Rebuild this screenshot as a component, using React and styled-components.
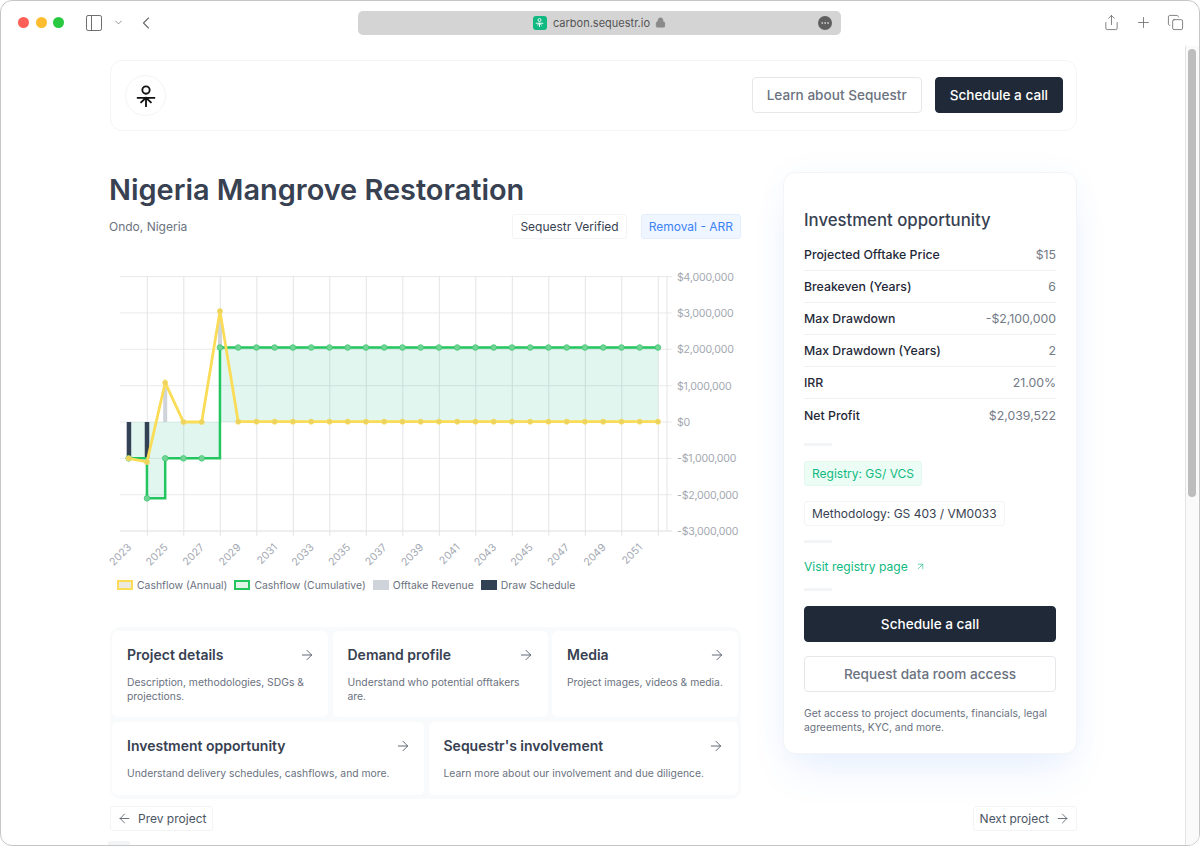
import React from 'react';
import styled, {createGlobalStyle} from 'styled-components';
import {ArrowLeft, ArrowRight, ArrowUpRight, ChevronDown, ChevronLeft, Copy, Ellipsis, Lock, PanelLeft, Plus, Share} from 'lucide-react';

const GlobalStyle = createGlobalStyle`
html, body {
    margin: 0;
    height: 846px;
    overflow: hidden;
    background: #fff;
    font-family: Inter, "Liberation Sans", sans-serif;
}
* { box-sizing: border-box; }
`;

const Window = styled.div`
width: 1200px;
height: 846px;
display: flex;
flex-direction: column;
background: #fff;
border: 1px solid #c6c6c6;
border-radius: 12px;
overflow: hidden;
`;

const Toolbar = styled.header`
height: 45px;
flex-shrink: 0;
display: flex;
align-items: center;
color: #6e6e6e;
padding-bottom: 2px;
`;

const Lights = styled.div`
display: flex;
gap: 6.5px;
margin-left: 17px;
width: 66px;
`;

const Light = styled.span`
width: 11px;
height: 11px;
border-radius: 50%;
background: ${p => p.$color};
`;

const ToolLeft = styled.div`
width: 274px;
display: flex;
align-items: center;
`;

const UrlBar = styled.div`
width: 483px;
height: 24px;
background: #d4d4d4;
border-radius: 5px;
display: flex;
align-items: center;
justify-content: center;
position: relative;
font-size: 11px;
color: #555;
gap: 6px;
`;

const Favicon = styled.span`
width: 14px;
height: 14px;
border-radius: 3px;
background: #10b981;
display: flex;
align-items: center;
justify-content: center;
`;

const MoreDot = styled.span`
position: absolute;
right: 9px;
top: 5px;
width: 14px;
height: 14px;
border-radius: 50%;
background: #5f5f5f;
color: #ddd;
display: flex;
align-items: center;
justify-content: center;
`;

const ToolRight = styled.div`
margin-left: auto;
margin-right: 15px;
display: flex;
gap: 15px;
align-items: center;
`;

const Viewport = styled.div`
flex: 1;
min-height: 0;
display: flex;
`;

const Page = styled.main`
flex: 1;
min-width: 0;
padding: 14px 108px 0 109px;
`;

const Track = styled.div`
width: 14px;
flex-shrink: 0;
border-left: 1px solid #e4e4e4;
background: #fafafa;
padding: 3px 2px 0 2px;
`;

const Thumb = styled.div`
height: 448px;
width: 8px;
background: #bdbdbd;
border-radius: 4px;
`;

const TopCard = styled.div`
height: 71px;
border: 1px solid #f3f4f6;
border-radius: 12px;
display: flex;
align-items: center;
justify-content: space-between;
padding: 0 13px 0 14px;
`;

const LogoCircle = styled.div`
width: 41px;
height: 41px;
border-radius: 50%;
border: 1px solid #f3f4f6;
display: flex;
align-items: center;
justify-content: center;
`;

const Buttons = styled.div`
display: flex;
gap: 13px;
margin-bottom: 2px;
`;

const Button = styled.button`
height: 36px;
font-family: inherit;
font-size: 13.6px;
font-weight: 500;
border-radius: 4px;
padding: 0 14px;
border: 1px solid ${p => (p.$dark ? '#1f2937' : '#e5e7eb')};
background: ${p => (p.$dark ? '#1f2937' : '#fff')};
color: ${p => (p.$dark ? '#fff' : '#6b7280')};
width: ${p => (p.$full ? '100%' : 'auto')};
display: block;
`;

const Columns = styled.div`
display: grid;
grid-template-columns: 631px 294px;
justify-content: space-between;
align-items: start;
`;

const Left = styled.section`
padding-top: 39px;
`;

const Title = styled.h1`
margin: 0 0 0 -1px;
font-size: 28.9px;
line-height: 40px;
font-weight: 600;
color: #374151;
`;

const SubRow = styled.div`
margin-top: 4px;
display: flex;
align-items: center;
justify-content: space-between;
height: 25px;
`;

const Place = styled.span`
font-size: 12px;
color: #6b7280;
margin-left: -1px;
`;

const Tags = styled.div`
display: flex;
gap: 14px;
`;

const Tag = styled.span`
display: inline-flex;
align-items: center;
height: 25px;
padding: 0 7px;
border-radius: 3px;
font-size: 12px;
border: 1px solid ${p => p.$line || '#f3f4f6'};
background: ${p => p.$bg || '#fff'};
color: ${p => p.$color || '#374151'};
`;

const ChartSvg = styled.svg`
display: block;
margin-top: 26px;
overflow: visible;
`;

const Legend = styled.div`
display: flex;
align-items: center;
gap: 7px;
height: 16px;
margin-top: -1px;
padding-left: 7px;
font-size: 10.4px;
color: #6b7280;
`;

const Swatch = styled.span`
width: 16px;
height: 10px;
margin-right: -3px;
background: ${p => p.$bg};
border: ${p => (p.$line ? `2px solid ${p.$line}` : 'none')};
`;

const NavPanel = styled.div`
margin-top: 34px;
background: #f9fafb;
border-radius: 10px;
padding: 4px 3px 4px 2px;
display: flex;
flex-direction: column;
gap: 5px;
`;

const NavRow = styled.div`
display: grid;
grid-template-columns: ${p => p.$cols};
gap: 4.5px;
`;

const NavCard = styled.a`
background: #fff;
border-radius: 6px;
padding: 15px 15px 0;
height: ${p => p.$h}px;
display: block;
`;

const NavHead = styled.div`
display: flex;
align-items: center;
justify-content: space-between;
margin-right: -1.5px;
color: #374151;
font-size: 14px;
font-weight: 600;
line-height: 17px;
`;

const NavText = styled.p`
margin: 12px -6px 0 0;
font-size: 10.35px;
line-height: 14px;
color: #6b7280;
`;

const Pager = styled.div`
display: flex;
justify-content: space-between;
align-items: center;
margin-top: 7px;
`;

const PagerButton = styled.a`
height: 25px;
padding: 0 6px;
display: inline-flex;
align-items: center;
gap: 6px;
border: 1px solid #f3f4f6;
border-radius: 3px;
font-size: 12px;
color: #4b5563;
background: #fff;
`;

const Chip = styled.div`
width: 22px;
height: 10px;
margin: 10px 0 0 -2px;
background: #f3f4f6;
border-radius: 2px;
`;

const Side = styled.aside`
margin-top: 41px;
height: 582px;
background: #fff;
border: 1px solid #f3f4f6;
border-radius: 12px;
padding: 36px 20px 0 20px;
box-shadow: 0 24px 40px -8px rgba(59, 130, 246, 0.1), 0 0 30px rgba(59, 130, 246, 0.04);
`;

const SideTitle = styled.h2`
margin: 0 0 8px;
font-size: 16.75px;
line-height: 22px;
font-weight: 500;
color: #374151;
`;

const Stat = styled.div`
height: 32px;
display: flex;
align-items: center;
justify-content: space-between;
font-size: 12.3px;
border-bottom: ${p => (p.$last ? '0' : '1px solid #f0f0f1')};
`;

const StatName = styled.span`
color: #1f2937;
font-weight: 500;
`;

const StatValue = styled.span`
color: #737a86;
`;

const Rule = styled.div`
width: 28px;
height: 3px;
background: #f3f4f6;
margin: ${p => p.$m};
`;

const SideTag = styled(Tag)`
display: flex;
width: fit-content;
margin-bottom: 15px;
`;

const VisitLink = styled.a`
display: flex;
align-items: center;
gap: 7px;
height: 16px;
font-size: 12.1px;
color: #10b981;
`;

const Stack = styled.div`
display: flex;
flex-direction: column;
gap: 14px;
`;

const Note = styled.p`
margin: 14px 0 0;
font-size: 10.35px;
line-height: 14px;
color: #6b7280;
`;

const yOf = v => 422 - v * 36.35;
const xOf = i => 128.7 + i * 18.25;

const annual = [-1, -1.1, 1.08, 0, 0, 3.05, 0.01].concat(Array(23).fill(0.01));
const cumulative = [-1, -2.1, -1, -1, -1, 2.05].concat(Array(24).fill(2.05));

const steppedPath = cumulative.reduce((path, v, i) => {
    if (i === 0) return `M${xOf(0)} ${yOf(v)}`;
    return `${path} H${xOf(i)} V${yOf(v)}`;
}, '');

const annualPoints = annual.map((v, i) => `${xOf(i)},${yOf(v)}`).join(' ');
const gridY = [4, 3, 2, 1, 0, -1, -2, -3];
const gridX = Array.from({length: 15}, (_, i) => 147.3 + i * 36.5);

const money = v => (v < 0 ? '-' : '') + '$' + Math.abs(v * 1000000).toLocaleString('en-US');

const Chart = () => (
    <ChartSvg width="631" height="313" viewBox="110 265 631 313">
        {gridY.map(v => (
            <line key={v} x1="120" x2="672" y1={yOf(v)} y2={yOf(v)} stroke={v === -3 ? '#dcdee2' : '#e9eaec'} strokeWidth="1"/>
        ))}
        {gridX.map(x => (
            <line key={x} x1={x} x2={x} y1="276" y2="536" stroke="#e3e4e7" strokeWidth="1"/>
        ))}
        <line x1="667" x2="667" y1="276" y2="531" stroke="#e3e4e7"/>
        <path d={`${steppedPath} V422 H${xOf(0)} Z`} fill="rgba(16, 185, 129, 0.13)"/>
        <rect x={xOf(2) - 2} y={yOf(1.08)} width="4" height={1.08 * 36.35} fill="#cfd3da"/>
        <rect x={xOf(5) - 2} y={yOf(3.05)} width="4" height={36.4} fill="#cfd3da"/>
        <rect x={xOf(0) - 2} y="422" width="4.5" height="36" fill="#334155"/>
        <rect x={xOf(1) - 2.2} y="422" width="4.5" height="36" fill="#334155"/>
        <path d={steppedPath} fill="none" stroke="#22c55e" strokeWidth="2.5"/>
        {cumulative.map((v, i) => (
            <circle key={i} cx={xOf(i)} cy={yOf(v)} r="2.8" fill="#72d596" stroke="#3fc671" strokeWidth="0.8"/>
        ))}
        <polyline points={annualPoints} fill="none" stroke="#fbdc56" strokeWidth="2.8"/>
        {annual.map((v, i) => (
            <circle key={i} cx={xOf(i)} cy={yOf(v)} r="2.6" fill="#ecd35e" stroke="#f7dc63" strokeWidth="0.6"/>
        ))}
        {gridY.map(v => (
            <text key={v} x="677" y={yOf(v) + 4} fontSize="10.6" letterSpacing="-0.2" fill="#a3a8b1">{money(v)}</text>
        ))}
        {Array.from({length: 15}, (_, i) => (
            <text key={i} fontSize="10.5" fill="#a3a8b1" textAnchor="end"
                  transform={`translate(${132 + i * 36.5} 548) rotate(-45)`}>{2023 + i * 2}</text>
        ))}
    </ChartSvg>
);

const stats = [
    ['Projected Offtake Price', '$15'],
    ['Breakeven (Years)', '6'],
    ['Max Drawdown', '-$2,100,000'],
    ['Max Drawdown (Years)', '2'],
    ['IRR', '21.00%'],
    ['Net Profit', '$2,039,522'],
];

const topNav = [
    ['Project details', 'Description, methodologies, SDGs & projections.'],
    ['Demand profile', 'Understand who potential offtakers are.'],
    ['Media', 'Project images, videos & media.'],
];

const bottomNav = [
    ['Investment opportunity', 'Understand delivery schedules, cashflows, and more.'],
    ["Sequestr's involvement", 'Learn more about our involvement and due diligence.'],
];

const Logo = ({size = 24, color = '#111', width = 2}) => (
    <svg width={size} height={size} viewBox="0 0 24 24" fill="none" stroke={color} strokeWidth={width}>
        <circle cx="12" cy="5.5" r="4"/>
        <path d="M2 14H22M12 14V24M6 19.5L12 14L18 19.5"/>
    </svg>
);

const Nav = ({title, text, height}) => (
    <NavCard $h={height}>
        <NavHead>{title}<ArrowRight size={16} strokeWidth={1.3} color="#4b5563"/></NavHead>
        <NavText>{text}</NavText>
    </NavCard>
);

const App = () => (
    <Window>
        <GlobalStyle/>
        <Toolbar>
            <Lights>
                <Light $color="#ff5f57"/>
                <Light $color="#febc2e"/>
                <Light $color="#28c840"/>
            </Lights>
            <ToolLeft>
                <PanelLeft size={20} strokeWidth={1.2}/>
                <ChevronDown size={11} strokeWidth={1.6} style={{marginLeft: 9}}/>
                <ChevronLeft size={20} strokeWidth={1.4} style={{marginLeft: 12}}/>
            </ToolLeft>
            <UrlBar>
                <Favicon><Logo size={9} color="#fff" width={2.4}/></Favicon>
                carbon.sequestr.io
                <Lock size={11} fill="#8a8a8a" color="#8a8a8a" style={{marginLeft: -1}}/>
                <MoreDot><Ellipsis size={10}/></MoreDot>
            </UrlBar>
            <ToolRight>
                <Share size={17} strokeWidth={1.2}/>
                <Plus size={17} strokeWidth={1.2}/>
                <Copy size={17} strokeWidth={1.2}/>
            </ToolRight>
        </Toolbar>
        <Viewport>
            <Page>
                <TopCard>
                    <LogoCircle><Logo size={22}/></LogoCircle>
                    <Buttons>
                        <Button>Learn about Sequestr</Button>
                        <Button $dark>Schedule a call</Button>
                    </Buttons>
                </TopCard>
                <Columns>
                    <Left>
                        <Title>Nigeria Mangrove Restoration</Title>
                        <SubRow>
                            <Place>Ondo, Nigeria</Place>
                            <Tags>
                                <Tag>Sequestr Verified</Tag>
                                <Tag $bg="#eff6ff" $line="#e3edfb" $color="#3b82f6">Removal - ARR</Tag>
                            </Tags>
                        </SubRow>
                        <Chart/>
                        <Legend>
                            <Swatch $bg="#eceae0" $line="#fbdc56"/><span>Cashflow (Annual)</span>
                            <Swatch $bg="#e1f4e8" $line="#22c55e"/><span>Cashflow (Cumulative)</span>
                            <Swatch $bg="#cfd3da"/><span>Offtake Revenue</span>
                            <Swatch $bg="#334155"/><span>Draw Schedule</span>
                        </Legend>
                        <NavPanel>
                            <NavRow $cols="216px 215px 186px">
                                {topNav.map(([title, text]) => <Nav key={title} title={title} text={text} height={86}/>)}
                            </NavRow>
                            <NavRow $cols="312px 309px">
                                {bottomNav.map(([title, text]) => <Nav key={title} title={title} text={text} height={73}/>)}
                            </NavRow>
                        </NavPanel>
                    </Left>
                    <Side>
                        <SideTitle>Investment opportunity</SideTitle>
                        {stats.map(([name, value], i) => (
                            <Stat key={name} $last={i === stats.length - 1}>
                                <StatName>{name}</StatName>
                                <StatValue>{value}</StatValue>
                            </Stat>
                        ))}
                        <Rule $m="12px 0 15px"/>
                        <SideTag $bg="#ecfdf5" $line="#e3f8ee" $color="#10b981">Registry: GS/ VCS</SideTag>
                        <SideTag>Methodology: GS 403 / VM0033</SideTag>
                        <Rule $m="-1px 0 15px"/>
                        <VisitLink>Visit registry page <ArrowUpRight size={11} strokeWidth={1.3}/></VisitLink>
                        <Rule $m="14px 0 15px"/>
                        <Stack>
                            <Button $dark $full>Schedule a call</Button>
                            <Button $full>Request data room access</Button>
                        </Stack>
                        <Note>Get access to project documents, financials, legal agreements, KYC, and more.</Note>
                    </Side>
                </Columns>
                <Pager>
                    <PagerButton><ArrowLeft size={15} strokeWidth={1.3}/>Prev project</PagerButton>
                    <PagerButton>Next project<ArrowRight size={15} strokeWidth={1.3}/></PagerButton>
                </Pager>
                <Chip/>
            </Page>
            <Track><Thumb/></Track>
        </Viewport>
    </Window>
);

export default App;
